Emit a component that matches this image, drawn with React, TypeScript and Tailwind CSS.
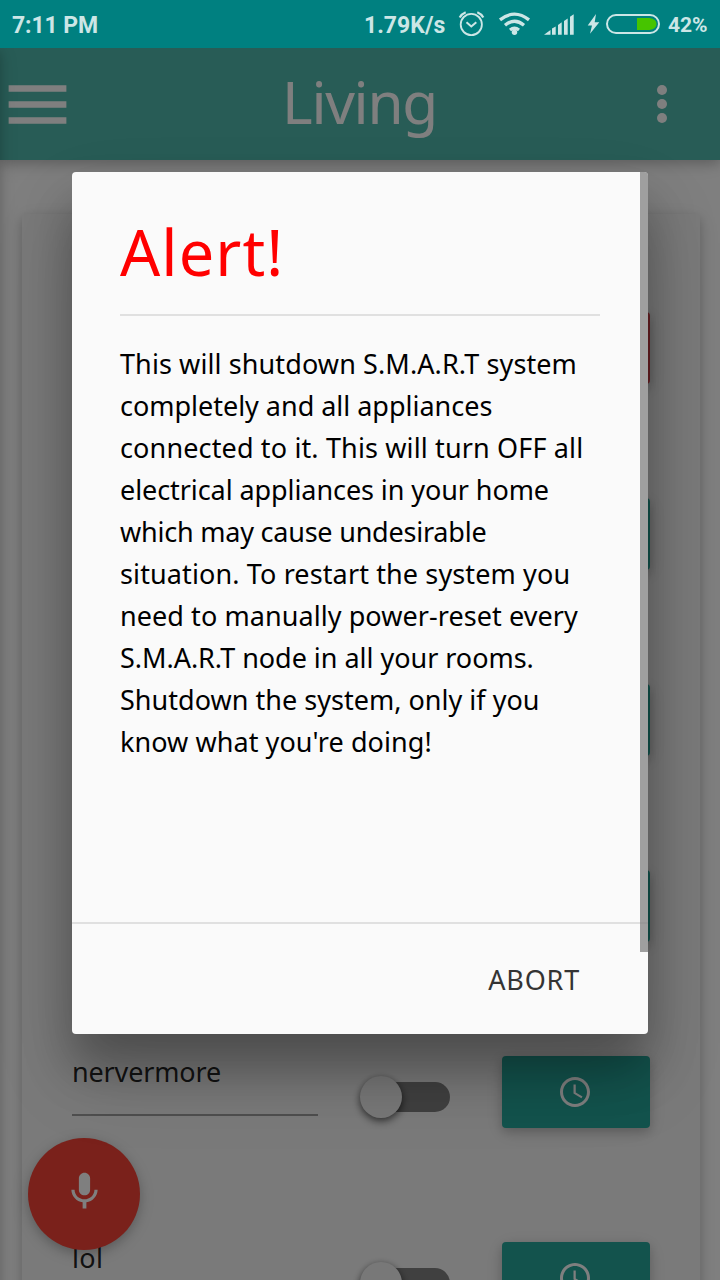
import { MdMic, MdSchedule } from "react-icons/md";

const rows = [
  { name: "", color: "bg-[#d04048]", spacing: "tracking-normal" },
  { name: "", color: "bg-[#26a69a]", spacing: "tracking-normal" },
  { name: "", color: "bg-[#26a69a]", spacing: "tracking-normal" },
  { name: "", color: "bg-[#26a69a]", spacing: "tracking-normal" },
  { name: "nervermore", color: "bg-[#26a69a]", spacing: "tracking-[-0.15px]" },
  { name: "lol", color: "bg-[#26a69a]", spacing: "tracking-[0.3px]" },
];

const message = [
  { text: "This will shutdown S.M.A.R.T system", spacing: "tracking-[0.1px]" },
  { text: "completely and all appliances", spacing: "tracking-[-0.02px]" },
  { text: "connected to it. This will turn OFF all", spacing: "tracking-[0.14px]" },
  { text: "electrical appliances in your home", spacing: "tracking-[-0.08px]" },
  { text: "which may cause undesirable", spacing: "tracking-[-0.22px]" },
  { text: "situation. To restart the system you", spacing: "tracking-[0.12px]" },
  { text: "need to manually power-reset every", spacing: "tracking-[0.07px]" },
  { text: "S.M.A.R.T node in all your rooms.", spacing: "tracking-[-0.03px]" },
  { text: "Shutdown the system, only if you", spacing: "tracking-[0.02px]" },
  { text: "know what you're doing!", spacing: "tracking-[0.06px]" },
];

function StatusBar() {
  return (
    <div className="flex h-12 shrink-0 items-center bg-[#008080] pl-3 font-['Roboto'] text-[23px] font-bold text-[#cce6e6]">
      <span className="w-[352px] pt-0.5 leading-none tracking-[-0.1px]">7:11 PM</span>
      <span className="w-[93px] pt-0.5 leading-none">1.79K/s</span>
      <svg className="h-12 w-[211px] shrink-0" viewBox="457 0 211 48" fill="none" stroke="#cce6e6">
        <circle cx="471.3" cy="24.5" r="10.6" strokeWidth="1.8" />
        <path d="M466.5 22.200l4.800 4.300 5-4.300" strokeWidth="2" />
        <path d="M459.700 17.500q2-3.700 6-5.300M483.300 17.500q-2-3.700-6-5.300" strokeWidth="2.200" />
        <path d="M500 19.900q14.500-11.500 29 0M505 25.200q9.500-8 19 0M510 30q4.500-3.500 9 0" strokeWidth="3.300" />
        <circle cx="514.500" cy="32.200" r="2.700" fill="#cce6e6" stroke="none" />
        <path d="M544 34.700l6.500-4.700v4.700zM552 28.500l3.700-2v8.200h-3.700zM558 25l3.700-2.700v12.400h-3.700zM564 21l3.700-2.500v16.200h-3.700zM570 16.700l3.700-2.500v20.500h-3.700z" fill="#cce6e6" stroke="none" />
        <path d="M596 14l-8.300 11.500h4.300l-2 8.200 9.300-11.500h-4.600z" fill="#cce6e6" stroke="none" />
        <rect x="607" y="15" width="52" height="18" rx="9" strokeWidth="2" />
        <path d="M637 18h12.500q7 1 7 6t-7 6H637z" fill="#46c400" stroke="none" />
      </svg>
      <span className="pt-0.5 text-[21px] leading-none">42%</span>
    </div>
  );
}

function Navbar() {
  return (
    <div className="relative flex h-28 shrink-0 items-center justify-between bg-[#50b8ac] pr-[53px] shadow-[0_4px_10px_rgba(0,0,0,0.16),0_4px_20px_rgba(0,0,0,0.12)]">
      <svg className="-ml-px h-[77px] w-[77px]" viewBox="0 0 24 24" fill="white">
        <path d="M3 18h18v-2H3v2zm0-5h18v-2H3v2zm0-7v2h18V6H3z" />
      </svg>
      <span className="mr-1.5 pb-1.5 text-[58.5px] leading-none tracking-[-1.3px] text-white">Living</span>
      <svg className="h-10 w-[18px]" viewBox="0 0 18 40" fill="white">
        <circle cx="13" cy="6" r="5" />
        <circle cx="13" cy="20" r="5" />
        <circle cx="13" cy="34" r="5" />
      </svg>
    </div>
  );
}

function ApplianceRow({ name, color, spacing }: { name: string; color: string; spacing: string }) {
  return (
    <div className="isolate flex h-[186px] shrink-0 items-start">
      <div className={`h-[60px] w-[246px] border-b-2 border-[#9e9e9e] text-[27px] leading-8 text-black/87 ${spacing}`}>{name}</div>
      <div className="mt-5 ml-[42px] flex h-[42px] w-[90px] items-center">
        <div className="relative z-10 h-[42px] w-[42px] rounded-full bg-[#f1f1f1] shadow-[0_2px_6px_rgba(0,0,0,0.4),0_4px_10px_rgba(0,0,0,0.3)]" />
        <div className="-ml-[27px] h-[30px] w-[75px] rounded-full bg-[#818181]" />
      </div>
      <div className={`ml-[52px] flex h-[72px] w-[148px] items-center justify-center rounded-[4px] pr-0.5 text-white shadow-[0_4px_10px_rgba(0,0,0,0.16),0_4px_20px_rgba(0,0,0,0.12)] ${color}`}>
        <MdSchedule size={36} />
      </div>
    </div>
  );
}

function AlertModal() {
  return (
    <div className="absolute top-[124px] left-[72px] flex h-[862px] w-[576px] flex-col rounded-[4px] bg-[#fafafa] shadow-[0_32px_48px_rgba(0,0,0,0.28),0_40px_80px_rgba(0,0,0,0.15)]">
      <div className="flex h-[750px] flex-col px-12 pt-12">
        <h1 className="h-[94px] text-[63px] leading-[64px] tracking-[1.1px] text-[#ff0000]">Alert!</h1>
        <div className="h-[2px] shrink-0 bg-[#e0e0e0]" />
        <div className="mt-[27px] text-[27px] leading-[42px] text-black">
          {message.map((line) => (
            <p key={line.text} className={`whitespace-nowrap ${line.spacing}`}>{line.text}</p>
          ))}
        </div>
      </div>
      <div className="flex h-[112px] items-center justify-end border-t-2 border-[#e0e0e0] pt-0.5 pr-[68px] text-[27px] text-[#343434]">
        <button className="tracking-[0.8px]">ABORT</button>
      </div>
      <div className="absolute top-0 right-0 h-[780px] w-2 rounded-tr-[4px] bg-[#808080]/75" />
    </div>
  );
}

export default function App() {
  return (
    <div className="flex h-[1280px] w-[720px] flex-col overflow-hidden font-['Noto_Sans',sans-serif]">
      <StatusBar />
      <div className="relative flex min-h-0 flex-1 flex-col overflow-hidden bg-white">
        <Navbar />
        <div className="mt-[54px] ml-[22px] flex h-[1200px] w-[678px] shrink-0 flex-col rounded-[4px] bg-[#f5f5f5] pt-[98px] pl-[50px] shadow-[0_4px_10px_rgba(0,0,0,0.16),0_4px_20px_rgba(0,0,0,0.12)]">
          {rows.map((row, i) => (
            <ApplianceRow key={i} {...row} />
          ))}
        </div>
        <div className="absolute top-0 -left-5 h-[1300px] w-5 shadow-[0_4px_10px_rgba(0,0,0,0.16),0_4px_20px_rgba(0,0,0,0.12)]" />
        <button className="absolute top-[1090px] left-7 flex h-28 w-28 items-center justify-center rounded-full bg-[#f44336] pb-[5px] text-white shadow-[0_4px_10px_rgba(0,0,0,0.16),0_4px_20px_rgba(0,0,0,0.12)]">
          <MdMic size={45} />
        </button>
        <div className="absolute inset-0 bg-black/50" />
        <AlertModal />
      </div>
    </div>
  );
}
